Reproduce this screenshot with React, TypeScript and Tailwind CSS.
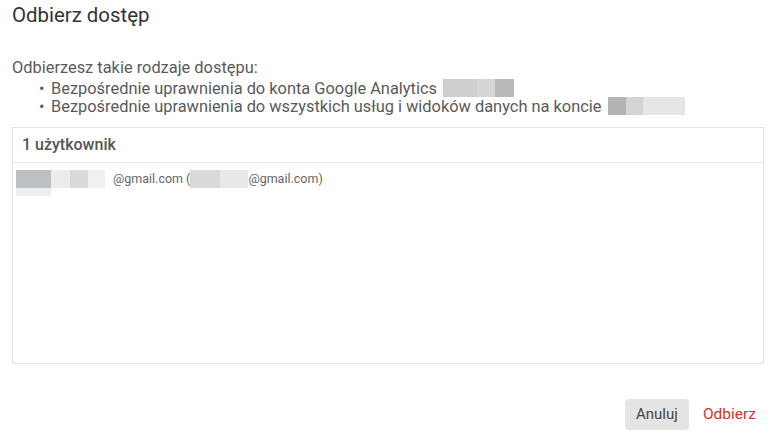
import React from "react";

const Blur: React.FC<{ c: string; w: string; h?: string }> = ({ c, w, h = "h-[18px]" }) => (
  <span className={`inline-block ${w} ${h} ${c}`} />
);

export default function App() {
  return (
    <div
      className="w-[772px] h-[435px] bg-white text-[#5a5a5a] flex flex-col overflow-hidden"
      style={{ fontFamily: "Roboto, 'Liberation Sans', sans-serif" }}
    >
      {/* Title */}
      <h1 className="pl-3 pt-[3px] text-[20.4px] leading-6 text-[#333]">Odbierz dostęp</h1>

      {/* Description */}
      <div className="pl-3 mt-[32px] text-[16.4px] leading-[17px]">
        <p>Odbierzesz takie rodzaje dostępu:</p>
        <ul className="mt-[3px] pl-[40px]">
          <li className="flex items-center">
            <span className="w-[12px] -ml-[13px]">•</span>
            <span>Bezpośrednie uprawnienia do konta Google Analytics</span>
            <span className="ml-[6px] flex h-[18px]">
              <Blur c="bg-[#cfcfcf]" w="w-[34px]" />
              <Blur c="bg-[#d6d6d6]" w="w-[18px]" />
              <Blur c="bg-[#b9b9b9]" w="w-[19px]" />
            </span>
          </li>
          <li className="flex items-center">
            <span className="w-[12px] -ml-[13px]">•</span>
            <span>Bezpośrednie uprawnienia do wszystkich usług i widoków danych na koncie</span>
            <span className="ml-[6px] flex h-[18px]">
              <Blur c="bg-[#b3b3b3]" w="w-[18px]" />
              <Blur c="bg-[#d4d4d4]" w="w-[17px]" />
              <Blur c="bg-[#e6e6e6]" w="w-[42px]" />
            </span>
          </li>
        </ul>
      </div>

      {/* Users table */}
      <div className="ml-3 mr-2 mt-[12px] h-[237px] border border-[#e3e3e3] flex flex-col">
        <div className="h-[35px] px-[9px] flex items-center border-b border-[#e8e8e8] text-[16px] font-medium text-[#555]">
          1 użytkownik
        </div>
        <div className="flex items-start pl-[3px] pt-[7px] text-[12.5px] text-[#666]">
          <div className="flex flex-col">
            <div className="flex">
              <Blur c="bg-[#bcc0c3]" w="w-[35px]" />
              <Blur c="bg-[#ececec]" w="w-[19px]" />
              <Blur c="bg-[#d9d9d9]" w="w-[18px]" />
              <Blur c="bg-[#f0f0f0]" w="w-[17px]" />
            </div>
            <Blur c="bg-[#eeeeee]" w="w-[35px]" h="h-[8px]" />
          </div>
          <span className="ml-[8px] leading-[18px]">@gmail.com (</span>
          <span className="flex h-[18px]">
            <Blur c="bg-[#d9d9d9]" w="w-[30px]" />
            <Blur c="bg-[#e8e8e8]" w="w-[28px]" />
          </span>
          <span className="leading-[18px]">@gmail.com)</span>
        </div>
      </div>

      {/* Actions */}
      <div className="mt-[35px] pr-4 flex justify-end items-center gap-[14px]">
        <button className="h-[31px] w-[64px] rounded bg-[#e4e4e4] text-[15px] text-[#444]">Anuluj</button>
        <button className="h-[31px] text-[15.5px] text-[#d0342c]">Odbierz</button>
      </div>
    </div>
  );
}
